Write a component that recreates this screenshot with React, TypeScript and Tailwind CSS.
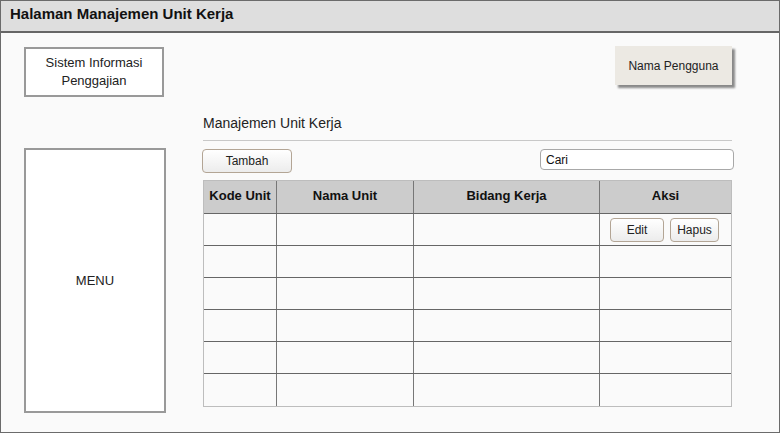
import React from 'react';

const columns = [
  { label: 'Kode Unit', width: 'w-[72px]' },
  { label: 'Nama Unit', width: 'w-[137px]' },
  { label: 'Bidang Kerja', width: 'w-[186px]' },
  { label: 'Aksi', width: 'flex-1' },
];

const rows = [0, 1, 2, 3, 4, 5];

const btn =
  'rounded-[4px] border border-[#b3a595] bg-gradient-to-b from-white to-[#ececec] text-[12px] text-[#222] leading-none flex items-center justify-center';

const App: React.FC = () => {
  return (
    <div className="w-[780px] h-[433px] border border-[#6b6b6b] bg-[#fafafa] font-['Liberation_Sans',Arial,sans-serif] text-[#111] flex flex-col overflow-hidden">
      {/* Header */}
      <div className="h-[32px] shrink-0 bg-[#dedede] border-b-2 border-[#666] pl-[9px] flex items-center">
        <span className="text-[15px] font-bold -mt-[3px]">Halaman Manajemen Unit Kerja</span>
      </div>

      <div className="flex flex-1 pt-[14px] pl-[23px]">
        {/* Left column */}
        <div className="w-[142px] flex flex-col">
          <div className="w-[140px] h-[50px] border-2 border-[#999] bg-white flex items-center justify-center text-center text-[13px] leading-[18px] text-[#222]">
            Sistem Informasi
            <br />
            Penggajian
          </div>
          <div className="mt-[51px] w-[142px] h-[265px] border-2 border-[#999] bg-white flex items-center justify-center text-[13px] text-[#222]">
            MENU
          </div>
        </div>

        {/* Main */}
        <div className="ml-[37px] w-[531px] flex flex-col">
          <div className="flex justify-end pr-[2px] -mt-px">
            <div className="w-[117px] h-[39px] bg-[#ece9e3] shadow-[3px_3px_2px_rgba(0,0,0,0.45)] flex items-center justify-center text-[12px] text-[#222]">
              Nama Pengguna
            </div>
          </div>

          <div className="mt-[30px] text-[14px] text-[#222] leading-[16px]">Manajemen Unit Kerja</div>
          <div className="mt-[9px] w-[529px] h-px bg-[#c8c8c8]" />

          <div className="mt-[8px] flex items-start justify-between">
            <div className={`${btn} w-[90px] h-[24px] -ml-px`}>Tambah</div>
            <div className="w-[194px] h-[21px] rounded-[4px] border border-[#a8a8a8] bg-white text-[12px] pl-[5px] flex items-center">
              Cari
            </div>
          </div>

          {/* Table */}
          <div className="mt-[7px] w-[529px] border border-[#bdbdbd] bg-[#fafafa]">
            <div className="flex h-[33px] bg-[#cccccc] border-b border-[#666]">
              {columns.map((c, i) => (
                <div
                  key={c.label}
                  className={`${c.width} ${i > 0 ? 'border-l border-[#777]' : ''} flex items-center justify-center text-[13px] font-bold pb-[3px]`}
                >
                  {c.label}
                </div>
              ))}
            </div>
            {rows.map((r) => (
              <div key={r} className={`flex h-[32px] ${r < rows.length - 1 ? 'border-b border-[#666]' : ''}`}>
                {columns.map((c, i) => (
                  <div key={c.label} className={`${c.width} ${i > 0 ? 'border-l border-[#777]' : ''} flex items-center`}>
                    {r === 0 && i === 3 && (
                      <div className="flex gap-[6px] pl-[10px] pt-[1px]">
                        <div className={`${btn} w-[54px] h-[24px]`}>Edit</div>
                        <div className={`${btn} w-[49px] h-[24px]`}>Hapus</div>
                      </div>
                    )}
                  </div>
                ))}
              </div>
            ))}
          </div>
        </div>
      </div>
    </div>
  );
};

export default App;
